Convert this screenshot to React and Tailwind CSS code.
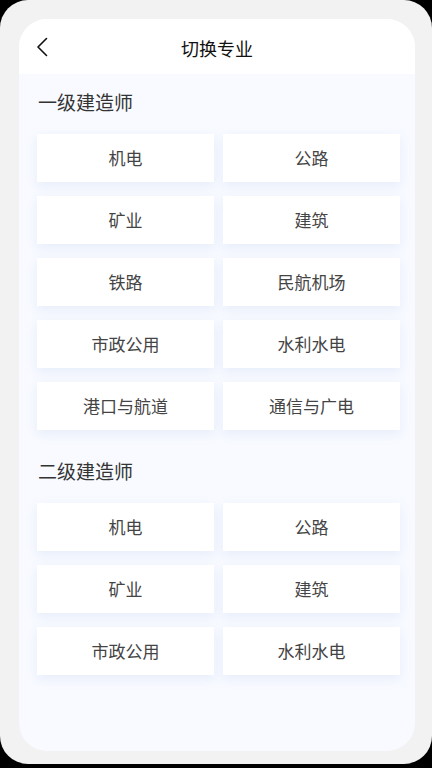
import React from 'react';

const yiji = ['机电', '公路', '矿业', '建筑', '铁路', '民航机场', '市政公用', '水利水电', '港口与航道', '通信与广电'];
const erji = ['机电', '公路', '矿业', '建筑', '市政公用', '水利水电'];

function Section({ title, items, top }) {
  return (
    <div className={top}>
      <h2 className="pl-[19px] text-[19px] leading-[24px] text-[#333333]">{title}</h2>
      <div className="mt-[20px] grid grid-cols-2 gap-x-[9px] gap-y-[14px] pl-[18px] pr-[15px]">
        {items.map((name, i) => (
          <button
            key={i}
            className="h-[48px] bg-white text-[17px] text-[#444444] shadow-[0_4px_10px_rgba(210,222,245,0.45)] flex items-center justify-center"
          >
            {name}
          </button>
        ))}
      </div>
    </div>
  );
}

export default function App() {
  return (
    <div className="bg-black h-[768px]" style={{ fontFamily: '"Noto Sans CJK SC", "Noto Sans", sans-serif' }}>
      <div className="h-[764px] rounded-[28px] bg-[#f2f2f2] pt-[19px] pl-[19px] pr-[17px]">
        <div className="h-[732px] rounded-[28px] bg-[#f8faff] overflow-hidden flex flex-col">
          {/* Header */}
          <div className="h-[55px] bg-white grid grid-cols-[1fr_auto_1fr] items-center">
            <div className="pl-[17px] flex items-center">
              <svg width="12" height="20" viewBox="0 0 12 20" fill="none">
                <path d="M10.5 1.5L2 10l8.5 8.5" stroke="#111" strokeWidth="1.6" strokeLinecap="round" strokeLinejoin="round" />
              </svg>
            </div>
            <h1 className="text-[18px] text-[#111111] leading-[24px] pt-[2px]">切换专业</h1>
            <div />
          </div>

          <Section title="一级建造师" items={yiji} top="pt-[16px]" />
          <Section title="二级建造师" items={erji} top="pt-[29px]" />
        </div>
      </div>
    </div>
  );
}
